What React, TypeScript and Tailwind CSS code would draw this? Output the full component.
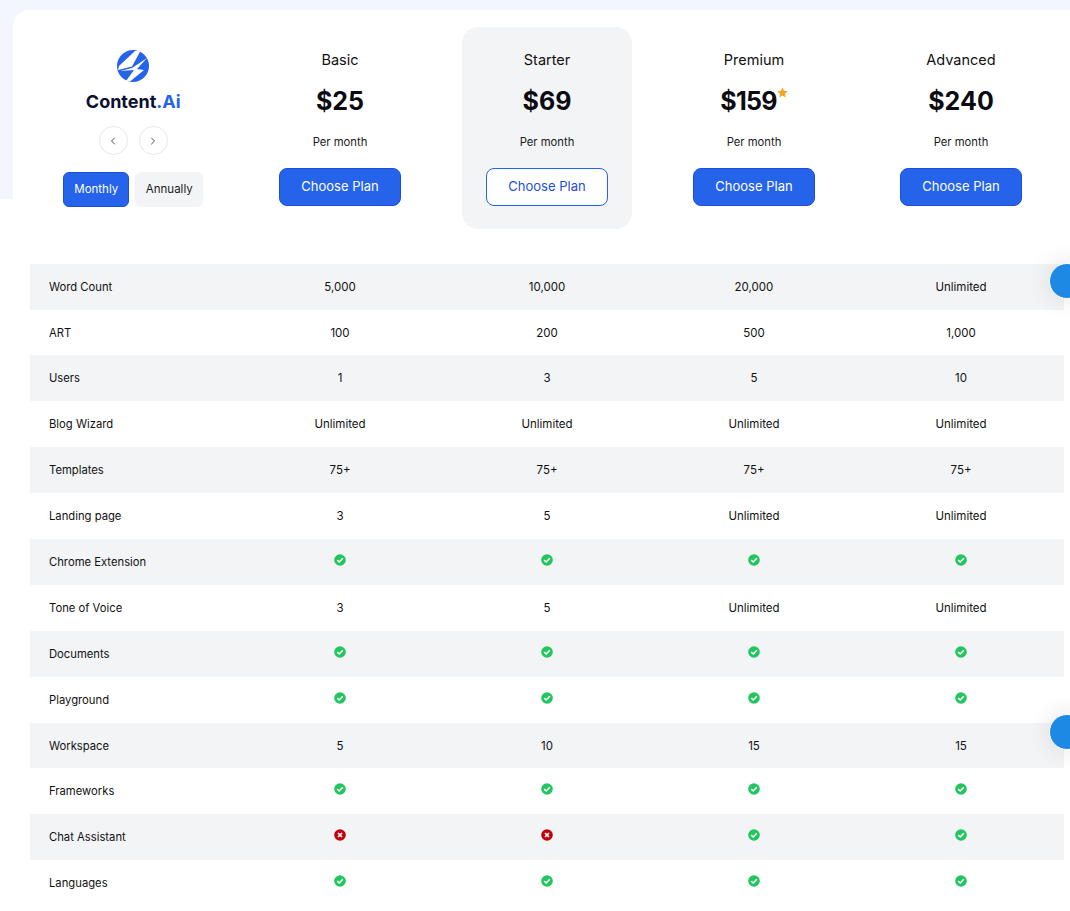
import React from 'react';
import { ChevronLeft, ChevronRight } from 'lucide-react';

type Cell = string | boolean;

const plans = [
  { name: 'Basic', price: '$25' },
  { name: 'Starter', price: '$69', highlight: true },
  { name: 'Premium', price: '$159', star: true },
  { name: 'Advanced', price: '$240' },
];

const rows: { label: string; values: Cell[]; short?: boolean }[] = [
  { label: 'Word Count', values: ['5,000', '10,000', '20,000', 'Unlimited'] },
  { label: 'ART', values: ['100', '200', '500', '1,000'], short: true },
  { label: 'Users', values: ['1', '3', '5', '10'] },
  { label: 'Blog Wizard', values: ['Unlimited', 'Unlimited', 'Unlimited', 'Unlimited'] },
  { label: 'Templates', values: ['75+', '75+', '75+', '75+'] },
  { label: 'Landing page', values: ['3', '5', 'Unlimited', 'Unlimited'] },
  { label: 'Chrome Extension', values: [true, true, true, true] },
  { label: 'Tone of Voice', values: ['3', '5', 'Unlimited', 'Unlimited'] },
  { label: 'Documents', values: [true, true, true, true] },
  { label: 'Playground', values: [true, true, true, true] },
  { label: 'Workspace', values: ['5', '10', '15', '15'], short: true },
  { label: 'Frameworks', values: [true, true, true, true] },
  { label: 'Chat Assistant', values: [false, false, true, true] },
  { label: 'Languages', values: [true, true, true, true] },
];

const Logo = () => (
  <svg width="32" height="32" viewBox="0 0 32 32">
    <circle cx="16" cy="16" r="16" fill="#2563eb" />
    <polygon points="24,0 18,1 2,16 1,20 15,16.5" fill="#ffffff" />
    <polygon points="30,8 15,18 3,21 17,20 9,31 13,31.5 27,20 20,19" fill="#ffffff" />
  </svg>
);

const StatusIcon = ({ ok }: { ok: boolean }) => (
  <svg width="12" height="12" viewBox="0 0 12 12" className="-mt-[6px]">
    <circle cx="6" cy="6" r="5.8" fill={ok ? '#22c55e' : '#c0000c'} />
    {ok ? (
      <path d="M3.2 6.2 5.2 8l3.6-3.7" fill="none" stroke="#fff" strokeWidth="1.6" />
    ) : (
      <path d="M4 4l4 4M8 4l-4 4" fill="none" stroke="#fff" strokeWidth="1.7" />
    )}
  </svg>
);

const PlanColumn = ({ plan }: { plan: (typeof plans)[0] }) => (
  <div
    className={`w-[170px] h-[202px] mx-auto flex flex-col items-center pt-[22px] rounded-2xl ${
      plan.highlight ? 'bg-[#f3f4f6]' : ''
    }`}
  >
    <div className="text-[14.5px] leading-[22px] text-[#111111]">{plan.name}</div>
    <div className="flex items-start mt-[12px] text-[25px] leading-[36px] font-bold text-[#0b0b12]">
      <span className={plan.star ? 'tracking-[-0.75px]' : ''}>{plan.price}</span>
      {plan.star && (
        <svg width="11" height="11" viewBox="0 0 24 24" className="mt-[4px]">
          <polygon points="12,1 15.4,8.3 23.4,9.3 17.5,14.8 19,22.7 12,18.8 5,22.7 6.5,14.8 0.6,9.3 8.6,8.3" fill="#f5a524" />
        </svg>
      )}
    </div>
    <div className="mt-[15px] text-[11.25px] leading-[17px] text-[#1a1a1a]">Per month</div>
    <button
      className={`mt-[17px] w-[122px] h-[38px] rounded-lg border text-[13px] ${
        plan.highlight ? 'bg-white border-[#2563eb] text-[#1d4ed8]' : 'bg-[#2563eb] border-[#1d4ed8] text-white'
      }`}
    >
      Choose Plan
    </button>
  </div>
);

const FloatingDot = ({ className }: { className: string }) => (
  <div className={`absolute left-[1049px] w-[36px] h-[36px] rounded-full bg-[#1e88e5] border border-white shadow-[0_0_24px_rgba(0,0,0,0.12)] ${className}`} />
);

export default function App() {
  return (
    <div className="relative h-[911px] overflow-hidden bg-white font-['Inter',sans-serif] text-[#111111]">
      <header className="h-[199px] bg-[#f4f6ff] pt-[10px] pl-[13px]">
        <div className="h-[240px] bg-white rounded-tl-2xl pl-[17px] pt-[17px]">
          <div className="grid grid-cols-[206.5px_repeat(4,207px)]">
            <div className="flex flex-col items-center pt-[23px]">
              <Logo />
              <div className="mt-[7px] text-[18px] leading-[26px] font-bold text-[#0b1030]">
                Content<span className="text-[#2563eb]">.Ai</span>
              </div>
              <div className="mt-[11px] flex gap-[11px]">
                <button className="w-[29px] h-[29px] rounded-full border border-gray-200 flex items-center justify-center">
                  <ChevronLeft className="w-3 h-3" strokeWidth={1.5} />
                </button>
                <button className="w-[29px] h-[29px] rounded-full border border-gray-200 flex items-center justify-center">
                  <ChevronRight className="w-3 h-3" strokeWidth={1.5} />
                </button>
              </div>
              <div className="mt-[17px] flex gap-[6px] text-[11.5px]">
                <button className="w-[66px] h-[35px] rounded-md bg-[#2563eb] border border-[#1d4ed8] text-white">Monthly</button>
                <button className="w-[68px] h-[35px] rounded-md bg-[#f3f4f6] text-[#1a1a1a]">Annually</button>
              </div>
            </div>
            {plans.map(plan => (
              <PlanColumn key={plan.name} plan={plan} />
            ))}
          </div>
        </div>
      </header>

      <div className="mt-[65px] ml-[30px] w-[1034px]">
        {rows.map((row, i) => (
          <div
            key={row.label}
            className={`grid grid-cols-[206.5px_repeat(4,207px)] items-center pt-[2px] text-[11.5px] ${row.short ? 'h-[45px]' : 'h-[46px]'} ${
              i % 2 === 0 ? 'bg-[#f3f4f6]' : 'bg-white'
            }`}
          >
            <div className="pl-[19px] -mt-[1px] text-[11.25px]">{row.label}</div>
            {row.values.map((value, j) => (
              <div key={j} className="flex justify-center">
                {typeof value === 'boolean' ? <StatusIcon ok={value} /> : value}
              </div>
            ))}
          </div>
        ))}
      </div>

      <FloatingDot className="top-[263px]" />
      <FloatingDot className="top-[714px]" />
    </div>
  );
}
